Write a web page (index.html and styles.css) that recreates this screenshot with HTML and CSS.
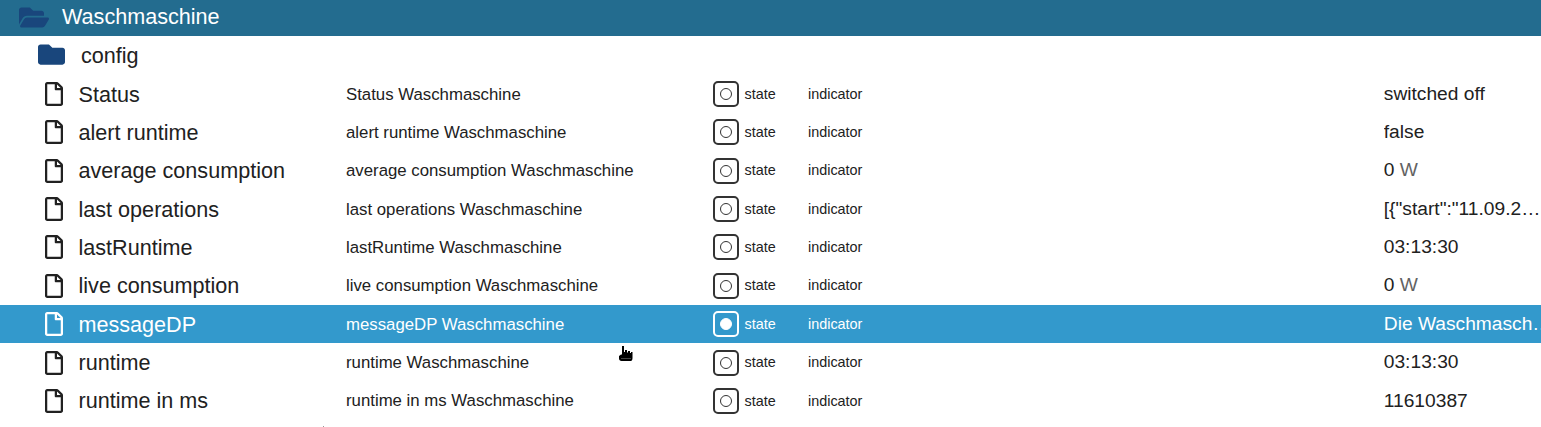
FILE: index.html
```html
<!DOCTYPE html>
<html lang="en">
<head>
    <meta charset="UTF-8">
    <meta name="viewport" content="width=device-width, initial-scale=1.0">
    <title>Waschmaschine</title>
    <link rel="stylesheet" href="styles.css">
</head>
<body>
    <svg class="icon-defs" aria-hidden="true">
        <symbol id="i-file" viewBox="0 0 384 512"><path d="M369.9 97.9L286 14C277 5 264.8-.1 252.1-.1H48C21.5 0 0 21.5 0 48v416c0 26.5 21.5 48 48 48h288c26.5 0 48-21.5 48-48V131.9c0-12.7-5.1-25-14.1-34zM332.1 128H256V51.9l76.1 76.1zM48 464V48h160v104c0 13.3 10.7 24 24 24h104v288H48z"/></symbol>
    </svg>

    <div class="tree-header">
        <svg class="folder-open" viewBox="0 0 576 512"><path d="M572.694 292.093L500.27 416.248A63.997 63.997 0 0 1 444.989 448H45.025c-18.523 0-30.064-20.093-20.731-36.093l72.424-124.155A64 64 0 0 1 152 256h399.964c18.523 0 30.064 20.093 20.73 36.093zM152 224h328v-48c0-26.51-21.49-48-48-48H272l-64-64H48C21.49 64 0 85.49 0 112v278.046l69.077-118.418C86.214 242.25 117.989 224 152 224z"/></svg>
        <span class="header-title">Waschmaschine</span>
    </div>

    <div class="tree-list">
        <div class="folder-row">
            <svg class="folder" viewBox="0 0 512 512" preserveAspectRatio="none"><path d="M464 128H272l-64-64H48C21.49 64 0 85.49 0 112v288c0 26.51 21.49 48 48 48h416c26.51 0 48-21.49 48-48V176c0-26.51-21.49-48-48-48z"/></svg>
            <span>config</span>
        </div>

        <div class="row">
            <div class="cell-icon"><svg class="file"><use href="#i-file"/></svg></div>
            <div class="name">Status</div>
            <div class="desc">Status Waschmaschine</div>
            <div class="cell-state"><span class="state-box"><span class="state-dot"></span></span></div>
            <div class="type">state</div>
            <div class="role">indicator</div>
            <div class="value">switched off</div>
        </div>
        <div class="row">
            <div class="cell-icon"><svg class="file"><use href="#i-file"/></svg></div>
            <div class="name">alert runtime</div>
            <div class="desc">alert runtime Waschmaschine</div>
            <div class="cell-state"><span class="state-box"><span class="state-dot"></span></span></div>
            <div class="type">state</div>
            <div class="role">indicator</div>
            <div class="value">false</div>
        </div>
        <div class="row">
            <div class="cell-icon"><svg class="file"><use href="#i-file"/></svg></div>
            <div class="name">average consumption</div>
            <div class="desc">average consumption Waschmaschine</div>
            <div class="cell-state"><span class="state-box"><span class="state-dot"></span></span></div>
            <div class="type">state</div>
            <div class="role">indicator</div>
            <div class="value">0 <span class="unit">W</span></div>
        </div>
        <div class="row">
            <div class="cell-icon"><svg class="file"><use href="#i-file"/></svg></div>
            <div class="name">last operations</div>
            <div class="desc">last operations Waschmaschine</div>
            <div class="cell-state"><span class="state-box"><span class="state-dot"></span></span></div>
            <div class="type">state</div>
            <div class="role">indicator</div>
            <div class="value">[{"start":"11.09.2…</div>
        </div>
        <div class="row">
            <div class="cell-icon"><svg class="file"><use href="#i-file"/></svg></div>
            <div class="name">lastRuntime</div>
            <div class="desc">lastRuntime Waschmaschine</div>
            <div class="cell-state"><span class="state-box"><span class="state-dot"></span></span></div>
            <div class="type">state</div>
            <div class="role">indicator</div>
            <div class="value">03:13:30</div>
        </div>
        <div class="row">
            <div class="cell-icon"><svg class="file"><use href="#i-file"/></svg></div>
            <div class="name">live consumption</div>
            <div class="desc">live consumption Waschmaschine</div>
            <div class="cell-state"><span class="state-box"><span class="state-dot"></span></span></div>
            <div class="type">state</div>
            <div class="role">indicator</div>
            <div class="value">0 <span class="unit">W</span></div>
        </div>
        <div class="row selected">
            <div class="cell-icon"><svg class="file"><use href="#i-file"/></svg></div>
            <div class="name">messageDP</div>
            <div class="desc">messageDP Waschmaschine</div>
            <div class="cell-state"><span class="state-box"><span class="state-dot"></span></span></div>
            <div class="type">state</div>
            <div class="role">indicator</div>
            <div class="value">Die Waschmaschine ist fertig</div>
        </div>
        <div class="row">
            <div class="cell-icon"><svg class="file"><use href="#i-file"/></svg></div>
            <div class="name">runtime</div>
            <div class="desc">runtime Waschmaschine</div>
            <div class="cell-state"><span class="state-box"><span class="state-dot"></span></span></div>
            <div class="type">state</div>
            <div class="role">indicator</div>
            <div class="value">03:13:30</div>
        </div>
        <div class="row">
            <div class="cell-icon"><svg class="file"><use href="#i-file"/></svg></div>
            <div class="name">runtime in ms</div>
            <div class="desc">runtime in ms Waschmaschine</div>
            <div class="cell-state"><span class="state-box"><span class="state-dot"></span></span></div>
            <div class="type">state</div>
            <div class="role">indicator</div>
            <div class="value">11610387</div>
        </div>
    </div>

    <!-- mouse pointer caught in the screenshot -->
    <svg class="pointer" viewBox="0 0 16 18">
        <path class="pointer-hand" d="M1.500 11L3.500 9.500H4.500V1H6.500V7H7.500V5H9.500V7.500H10.500V6H12.500V8H13.500V7H15V13C15 15.500 14 16 12.500 16H4C2.500 16 1.500 15 1.500 13.500Z"/>
        <path class="pointer-dots" d="M4 13.500H13"/>
    </svg>
    <div class="speck"></div>
</body>
</html>
```

FILE: styles.css
```css
* {
    margin: 0;
    padding: 0;
    box-sizing: border-box;
}

html, body {
    width: 1541px;
    height: 427px;
    overflow: hidden;
}

body {
    position: relative;
    background: white;
    color: #212121;
    font-family: "Liberation Sans", Arial, sans-serif;
}

.icon-defs {
    display: none;
}

.tree-header {
    display: flex;
    align-items: center;
    height: 36px;
    padding-left: 19px;
    background: #236c8f;
    color: white;
    font-size: 21.6px;
}

.header-title {
    padding-bottom: 2px;
}

.folder-open {
    width: 30px;
    height: 27px;
    margin-right: 13px;
    margin-bottom: 1px;
    fill: #19467c;
}

.tree-list {
    padding-top: 0.6px;
}

.folder-row {
    display: flex;
    align-items: center;
    height: 38.35px;
    padding-left: 38px;
    font-size: 21.6px;
}

.folder {
    width: 27px;
    height: 27px;
    margin-right: 16px;
    margin-bottom: 2px;
    fill: #19467c;
}

.row {
    display: grid;
    grid-template-columns: 78.5px 267.5px 367.2px 31.3px 63.5px 575.8px 168.2px;
    align-items: center;
    height: 38.35px;
}

.row.selected {
    background: #3399cc;
    color: white;
}

.cell-icon {
    display: flex;
    padding-left: 44.7px;
}

.file {
    width: 18px;
    height: 24px;
    fill: #212121;
}

.selected .file {
    fill: white;
}

.name {
    padding-top: 1.15px;
    font-size: 21.6px;
    white-space: nowrap;
}

.desc {
    padding-top: 1.15px;
    font-size: 16.8px;
    white-space: nowrap;
}

.cell-state {
    display: flex;
}

.state-box {
    display: flex;
    flex: none;
    align-items: center;
    justify-content: center;
    width: 25.5px;
    height: 26px;
    border: 2px solid #333;
    border-radius: 5px;
}

.state-dot {
    flex: none;
    width: 12px;
    height: 12px;
    border: 1.8px solid #333;
    border-radius: 50%;
}

.selected .state-box {
    border-color: white;
}

.selected .state-dot {
    background: white;
    border-color: white;
}

.type,
.role {
    padding-bottom: 0.7px;
    font-size: 14.4px;
}

.value {
    padding-bottom: 0.7px;
    font-size: 19.2px;
    white-space: nowrap;
    overflow: hidden;
    text-overflow: ellipsis;
}

.unit {
    opacity: 0.7;
}

.pointer {
    position: absolute;
    left: 617px;
    top: 345px;
    width: 17px;
    height: 18px;
}

.pointer-hand {
    fill: #000;
}

.pointer-dots {
    fill: none;
    stroke: #888;
    stroke-width: 1;
    stroke-dasharray: 1 1;
}

.speck {
    position: absolute;
    left: 323px;
    top: 426px;
    width: 1px;
    height: 1px;
    background: #999;
}
```
